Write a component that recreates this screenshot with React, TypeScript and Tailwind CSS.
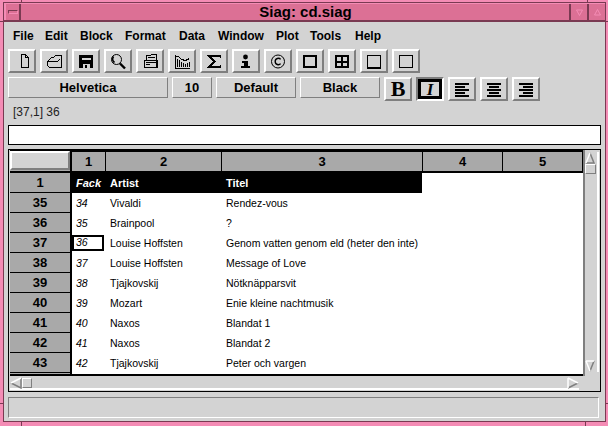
import type { ReactNode } from 'react';

const rows: [string, string, string, string][] = [
  ['35', '34', 'Vivaldi', 'Rendez-vous'],
  ['36', '35', 'Brainpool', '?'],
  ['37', '36', 'Louise Hoffsten', 'Genom vatten genom eld (heter den inte)'],
  ['38', '37', 'Louise Hoffsten', 'Message of Love'],
  ['39', '38', 'Tjajkovskij', 'Nötknäpparsvit'],
  ['40', '39', 'Mozart', 'Enie kleine nachtmusik'],
  ['41', '40', 'Naxos', 'Blandat 1'],
  ['42', '41', 'Naxos', 'Blandat 2'],
  ['43', '42', 'Tjajkovskij', 'Peter och vargen'],
];

const menus: [string, string][] = [
  ['File', 'w-[32px]'],
  ['Edit', 'w-[35px]'],
  ['Block', 'w-[45px]'],
  ['Format', 'w-[54px]'],
  ['Data', 'w-[39px]'],
  ['Window', 'w-[58px]'],
  ['Plot', 'w-[34px]'],
  ['Tools', 'w-[45px]'],
  ['Help', 'w-[40px]'],
];

function Icon({ children }: { children: ReactNode }) {
  return (
    <svg width="24" height="20" viewBox="0 0 24 20" fill="none" stroke="black" strokeWidth="1" shapeRendering="crispEdges">
      {children}
    </svg>
  );
}

const toolIcons: ReactNode[] = [
  <path d="M11.5 3.5H15.5L18.5 6.5V16.5H11.5ZM15.5 3.5V6.5H18.5" />,
  <path d="M5.5 10.5L9.5 6.5H11.5L13.5 4.5H19.5V16.5H7.5L5.5 14.5ZM5.5 10.5H15.5L17.5 8.5" />,
  <>
    <path d="M5 4H19V17H5Z" fill="black" stroke="none" />
    <path d="M8 7H17V9H8Z" fill="#d3d3d3" stroke="none" />
    <path d="M9 13H16V17H9Z" fill="#d3d3d3" stroke="none" />
    <path d="M11 14H13V17H11Z" fill="black" stroke="none" />
  </>,
  <g shapeRendering="auto">
    <circle cx="10.5" cy="8.5" r="5" />
    <path d="M7.5 5.5C6.2 7.5 6.6 10 8.5 11.5" strokeWidth="1.6" />
    <path d="M14 12.5L19 17.5" strokeWidth="2.4" />
  </g>,
  <>
    <path d="M8.5 4.5L18.5 3.5V9.5H8.5Z" />
    <path d="M6.5 9.5H19.5V16.5H6.5Z" strokeWidth="1" />
    <path d="M10 6.5H17M8 11.5H18M8 13.5H12" />
    <path d="M19 10V17" strokeWidth="2" />
  </>,
  <>
    <path d="M5.5 4V17.5H20M5.5 5.5H8.5L11.5 8.5L15.5 9.5L19.5 7.5" />
    <path d="M7.5 8V16M9.5 9V16M11.5 11V16M13.5 12V16M15.5 13V16M17.5 12V16M19.5 11V16" />
  </>,
  <path d="M5 4H19V7H18V6H9L14 10.5L9 15H18V14H19V17H5V16L11 10.5L5 5Z" fill="black" stroke="none" />,
  <>
    <circle cx="11.5" cy="6" r="2.4" fill="black" stroke="none" shapeRendering="auto" />
    <path d="M8 10H14V15H16V17H7V15H10V12H8Z" fill="black" stroke="none" />
  </>,
  <g shapeRendering="auto">
    <circle cx="12" cy="10.5" r="6.5" />
    <path d="M14.6 8.4C13.2 6.6 9.2 7 9.2 10.5C9.2 14 13.2 14.4 14.6 12.6" strokeWidth="1.4" />
  </g>,
  <path d="M6 5H18V16H6Z" strokeWidth="2" />,
  <>
    <path d="M6 5H18V16H6Z" strokeWidth="2" />
    <path d="M12 5V16M6 10.5H18" strokeWidth="2" />
  </>,
  <>
    <path d="M5.5 4.5H18.5V16.5H5.5Z" />
    <path d="M5 16H19V18H5Z" fill="black" stroke="none" />
  </>,
  <path d="M5.5 4.5H18.5V16.5H5.5Z" />,
];

function AlignIcon({ offsets }: { offsets: number[] }) {
  const widths = [14, 10, 14, 10, 14];
  return (
    <svg width="24" height="20" viewBox="0 0 24 20" shapeRendering="crispEdges">
      {widths.map((w, i) => (
        <rect key={i} x={offsets[i]} y={4 + i * 3} width={w} height="2" fill="black" />
      ))}
    </svg>
  );
}

function Raised({ children }: { children: ReactNode }) {
  return (
    <div className="flex h-[24px] w-[28px] shrink-0 items-center justify-center border-2 border-t-white border-l-white border-r-[#7f7f7f] border-b-[#7f7f7f]">
      {children}
    </div>
  );
}

function Field({ label, width }: { label: string; width: string }) {
  return (
    <div className={`flex h-[21px] shrink-0 items-center justify-center border border-t-white border-l-white border-r-[#7f7f7f] border-b-[#7f7f7f] text-[13px] font-bold ${width}`}>
      {label}
    </div>
  );
}

function ColHead({ label, width }: { label: string; width: string }) {
  return (
    <div className={`flex h-full shrink-0 items-center justify-center border-r border-black text-[13px] font-bold ${width}`}>
      {label}
    </div>
  );
}

function Arrow({ dir }: { dir: 'up' | 'down' | 'left' | 'right' }) {
  const shapes = {
    up: { lit: 'M1 11L5 1', dark: 'M5 1L9 11H1' },
    down: { lit: 'M1 1H9M1 1L5 11', dark: 'M9 1L5 11' },
    left: { lit: 'M1 6L11 1', dark: 'M1 6L11 11V1' },
    right: { lit: 'M1 1V11M1 1L11 6', dark: 'M11 6L1 11' },
  }[dir];
  return (
    <svg width="12" height="12" viewBox="0 0 12 12" fill="none" className="shrink-0">
      <path d={shapes.dark} stroke="#7f7f7f" strokeWidth="1.5" />
      <path d={shapes.lit} stroke="white" strokeWidth="1.5" />
    </svg>
  );
}

export default function App() {
  return (
    <div className="relative flex h-[426px] w-[608px] flex-col overflow-hidden bg-[#f48cb5] pb-[4px] pl-[3px] pr-[2px] pt-[2px] font-['Liberation_Sans',Arial,sans-serif] text-black">
      {/* frame notches */}
      <div className="absolute left-[21px] top-0 h-[3px] w-px bg-[#7a3a52]" />
      <div className="absolute left-[587px] top-0 h-[3px] w-px bg-[#7a3a52]" />
      <div className="absolute left-[21px] bottom-0 h-[4px] w-px bg-[#7a3a52]" />
      <div className="absolute left-[585px] bottom-0 h-[4px] w-px bg-[#7a3a52]" />
      <div className="absolute left-0 top-[21px] h-px w-[3px] bg-[#7a3a52]" />
      <div className="absolute right-0 top-[21px] h-px w-[2px] bg-[#7a3a52]" />
      <div className="absolute left-0 top-[403px] h-px w-[3px] bg-[#7a3a52]" />
      <div className="absolute right-0 top-[403px] h-px w-[2px] bg-[#7a3a52]" />

      {/* title bar */}
      <div className="flex h-[20px] shrink-0 flex-col border-x border-t border-[#7a3a52]">
        <div className="h-px shrink-0 bg-[#f48cb5]" />
        <div className="flex h-[16px] shrink-0 bg-[#dc7095]">
          <div className="w-[2px] shrink-0 bg-[#f48cb5]" />
          <div className="flex w-[15px] shrink-0 items-center justify-center border-r-2 border-[#7a3a52]">
            <div className="h-[4px] w-[10px] border border-t-[#7a3a52] border-l-[#7a3a52] border-r-[#f48cb5] border-b-[#f48cb5]" />
          </div>
          <div className="flex-1 pl-[21px] text-center text-[15px] font-bold leading-[16px]">Siag: cd.siag</div>
          <div className="flex w-[18px] shrink-0 items-center justify-center border-l-2 border-[#7a3a52] text-[#f48cb5]">
            <svg width="7" height="7" viewBox="0 0 7 7" fill="none" stroke="currentColor"><path d="M0.5 1H6.5L3.5 6.5Z" /></svg>
          </div>
          <div className="flex w-[18px] shrink-0 items-center justify-center border-l-2 border-[#7a3a52] text-[#f48cb5]">
            <svg width="7" height="7" viewBox="0 0 7 7" fill="none" stroke="currentColor"><path d="M0.5 6H6.5L3.5 0.5Z" /></svg>
          </div>
        </div>
        <div className="h-[2px] shrink-0 bg-[#7a3a52]" />
      </div>

      {/* client area */}
      <div className="flex min-h-0 flex-1 flex-col border-x border-b border-[#7a3a52] bg-[#d3d3d3] pl-[4px]">
        <div className="flex h-[27px] shrink-0 items-center pl-[5px] text-[12px] font-bold">
          {menus.map(([m, w]) => (
            <span key={m} className={w}>{m}</span>
          ))}
        </div>

        <div className="flex shrink-0 gap-[4px]">
          {toolIcons.map((icon, i) => (
            <Raised key={i}><Icon>{icon}</Icon></Raised>
          ))}
        </div>

        <div className="mt-[4px] flex h-[24px] shrink-0 items-start gap-[4px]">
          <Field label="Helvetica" width="w-[160px]" />
          <Field label="10" width="w-[40px]" />
          <Field label="Default" width="w-[80px]" />
          <Field label="Black" width="w-[80px]" />
          <Raised>
            <span className="font-['Liberation_Serif',serif] text-[22px] font-bold leading-none">B</span>
          </Raised>
          <div className="flex h-[24px] w-[28px] shrink-0 border-2 border-t-[#7f7f7f] border-l-[#7f7f7f] border-r-white border-b-white">
            <div className="flex min-w-0 flex-1 items-center justify-center overflow-hidden border-[3px] border-black font-['Liberation_Serif',serif] text-[17px] font-bold italic leading-none">
              I
            </div>
          </div>
          <Raised><AlignIcon offsets={[5, 5, 5, 5, 5]} /></Raised>
          <Raised><AlignIcon offsets={[5, 7, 5, 7, 5]} /></Raised>
          <Raised><AlignIcon offsets={[5, 9, 5, 9, 5]} /></Raised>
        </div>

        <div className="h-[24px] shrink-0 pl-[5px] text-[12px] leading-[22px] text-[#222]">[37,1] 36</div>

        <div className="mr-[4px] h-[20px] shrink-0 border border-black bg-white" />

        {/* sheet */}
        <div className="mr-[4px] mt-[4px] flex h-[243px] shrink-0 flex-col border border-black px-px">
          <div className="flex h-[226px] shrink-0">
            <div className="flex min-w-0 flex-1 flex-col border-y-2 border-black">
              {/* header row */}
              <div className="flex h-[21px] shrink-0 border-b-2 border-black bg-[#a9a9a9]">
                <div className="-mt-px h-[19px] w-[60px] shrink-0 border-2 border-t-white border-l-white border-r-[#7f7f7f] border-b-[#7f7f7f] bg-[#d3d3d3]" />
                <div className="w-[2px] shrink-0 bg-black" />
                <ColHead label="1" width="w-[34px]" />
                <ColHead label="2" width="w-[116px]" />
                <ColHead label="3" width="w-[201px]" />
                <ColHead label="4" width="w-[80px]" />
                <ColHead label="5" width="flex-1" />
              </div>
              {/* first row */}
              <div className="flex h-[20px] shrink-0">
                <div className="flex w-[60px] shrink-0 items-center justify-center border-b border-black bg-[#a9a9a9] text-[13px] font-bold">1</div>
                <div className="w-[2px] shrink-0 bg-black" />
                <div className="flex w-[350px] shrink-0 items-center bg-black text-[11px] font-bold text-white">
                  <span className="w-[34px] pl-[4px] italic">Fack</span>
                  <span className="w-[116px] pl-[4px]">Artist</span>
                  <span className="pl-[4px]">Titel</span>
                </div>
                <div className="flex-1 bg-white" />
              </div>
              {rows.map(([n, fack, artist, title]) => (
                <div key={n} className="flex h-[20px] shrink-0">
                  <div className="flex w-[60px] shrink-0 items-center justify-center border-b border-black bg-[#a9a9a9] pt-px text-[13px] font-bold">{n}</div>
                  <div className="w-[2px] shrink-0 bg-black" />
                  <div className="flex flex-1 items-center bg-white text-[10.5px]">
                    <span className={n === '37' ? 'mr-[2px] flex h-[16px] w-[32px] items-center border-2 border-black pl-[2px] italic' : 'w-[34px] pl-[4px] pt-[2px] italic'}>{fack}</span>
                    <span className="w-[116px] pl-[4px] pt-[2px]">{artist}</span>
                    <span className="whitespace-nowrap pl-[4px] pt-[2px]">{title}</span>
                  </div>
                </div>
              ))}
              <div className="flex min-h-0 flex-1">
                <div className="w-[60px] shrink-0 bg-[#a9a9a9]" />
                <div className="w-[2px] shrink-0 bg-black" />
                <div className="flex-1 bg-white" />
              </div>
            </div>
            {/* vertical scrollbar */}
            <div className="flex w-[16px] shrink-0 flex-col border-l-2 border-[#7f7f7f] pb-[4px] pt-[2px]">
              <div className="flex h-full w-[14px] flex-col border-r-2 border-white">
                <Arrow dir="up" />
                <div className="h-[10px] w-[11px] border border-t-white border-l-white border-r-[#7f7f7f] border-b-[#7f7f7f]" />
                <div className="flex-1" />
                <Arrow dir="down" />
              </div>
            </div>
          </div>
          {/* horizontal scrollbar */}
          <div className="mr-[20px] mt-px flex h-[13px] items-center border-b-2 border-white">
            <Arrow dir="left" />
            <div className="h-[10px] w-[10px] border border-t-white border-l-white border-r-[#7f7f7f] border-b-[#7f7f7f]" />
            <div className="flex-1" />
            <Arrow dir="right" />
          </div>
        </div>

        {/* status bar */}
        <div className="mr-[6px] mt-[5px] h-[21px] shrink-0 border border-t-[#7f7f7f] border-l-[#7f7f7f] border-r-white border-b-white" />
      </div>
    </div>
  );
}
